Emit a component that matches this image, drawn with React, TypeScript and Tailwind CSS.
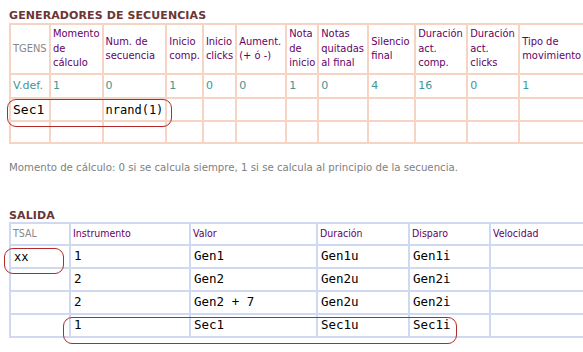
const labelFont = "font-['DejaVu_Sans_Condensed','Liberation_Sans',sans-serif]";
const valueFont = "font-['DejaVu_Sans','Verdana',sans-serif]";
const codeFont = "font-['DejaVu_Sans_Mono','Liberation_Mono',monospace]";

type Column = { label: string; width: number; def: string };

const generatorColumns: Column[] = [
  { label: "Momento de cálculo", width: 50, def: "1" },
  { label: "Num. de secuencia", width: 61, def: "0" },
  { label: "Inicio comp.", width: 34, def: "1" },
  { label: "Inicio clicks", width: 30, def: "0" },
  { label: "Aument. (+ ó -)", width: 48, def: "0" },
  { label: "Nota de inicio", width: 28, def: "1" },
  { label: "Notas quitadas al final", width: 48, def: "0" },
  { label: "Silencio final", width: 45, def: "4" },
  { label: "Duración act. comp.", width: 50, def: "16" },
  { label: "Duración act. clicks", width: 50, def: "0" },
  { label: "Tipo de movimiento", width: 57, def: "1" },
  { label: "Transp. límite", width: 60, def: "0" },
];

const outputColumns = [
  { label: "Instrumento", width: 118 },
  { label: "Valor", width: 125 },
  { label: "Duración", width: 90 },
  { label: "Disparo", width: 79 },
  { label: "Velocidad", width: 110 },
];

const outputRows = [
  { name: "xx", cells: ["1", "Gen1", "Gen1u", "Gen1i", ""] },
  { name: "", cells: ["2", "Gen2", "Gen2u", "Gen2i", ""] },
  { name: "", cells: ["2", "Gen2 + 7", "Gen2u", "Gen2i", ""] },
  { name: "", cells: ["1", "Sec1", "Sec1u", "Sec1i", ""] },
];

function SectionTitle({ children }: { children: string }) {
  return (
    <h2 className={`${valueFont} text-[11px] leading-[13px] font-bold tracking-[0.1px] text-[#6b3535]`}>
      {children}
    </h2>
  );
}

function GeneratorsTable() {
  return (
    <table className="table-fixed border-separate border-spacing-[2px] bg-[#f6d4c4] w-max">
      <colgroup>
        <col style={{ width: 38 }} />
        {generatorColumns.map((c) => (
          <col key={c.label} style={{ width: c.width }} />
        ))}
      </colgroup>
      <tbody>
        <tr>
          <td className={`${labelFont} bg-white h-[48px] px-[2px] text-[11px] leading-[14px] text-[#888888] align-middle`}>
            TGENS
          </td>
          {generatorColumns.map((c) => (
            <td
              key={c.label}
              className={`${labelFont} bg-white h-[48px] px-[2px] text-[11px] leading-[14.5px] text-[#660066] align-middle`}
            >
              {c.label}
            </td>
          ))}
        </tr>
        <tr>
          <td className={`${valueFont} bg-white h-[22px] px-[2px] text-[11px] text-[#3f9696]`}>V.def.</td>
          {generatorColumns.map((c) => (
            <td key={c.label} className={`${valueFont} bg-white h-[22px] px-[2px] text-[11px] text-[#3f9696]`}>
              {c.def}
            </td>
          ))}
        </tr>
        <tr>
          <td className={`${codeFont} bg-white h-[21px] px-[2px] text-[13px] text-black`}>Sec1</td>
          {generatorColumns.map((c, i) => (
            <td key={c.label} className={`${codeFont} bg-white h-[21px] px-[2px] text-[12px] text-black`}>
              {i === 1 ? "nrand(1)" : ""}
            </td>
          ))}
        </tr>
        <tr>
          <td className="bg-white h-[20px]" />
          {generatorColumns.map((c) => (
            <td key={c.label} className="bg-white h-[20px]" />
          ))}
        </tr>
      </tbody>
    </table>
  );
}

function OutputTable() {
  return (
    <table className="table-fixed border-separate border-spacing-[2px] bg-[#cfdaf2] w-max">
      <colgroup>
        <col style={{ width: 58 }} />
        {outputColumns.map((c) => (
          <col key={c.label} style={{ width: c.width }} />
        ))}
      </colgroup>
      <tbody>
        <tr>
          <td className={`${labelFont} bg-white h-[20px] px-[2px] text-[10.5px] text-[#888888]`}>TSAL</td>
          {outputColumns.map((c) => (
            <td key={c.label} className={`${labelFont} bg-white h-[20px] px-[2px] text-[10.5px] text-[#660066]`}>
              {c.label}
            </td>
          ))}
        </tr>
        {outputRows.map((row, r) => (
          <tr key={r}>
            <td className={`${codeFont} bg-white h-[21px] px-[3px] text-[12px] text-black`}>{row.name}</td>
            {row.cells.map((v, i) => (
              <td key={i} className={`${codeFont} bg-white h-[21px] px-[3px] text-[12.5px] text-black`}>
                {v}
              </td>
            ))}
          </tr>
        ))}
      </tbody>
    </table>
  );
}

// hand-drawn marks around the edited rows
function Mark({ className }: { className: string }) {
  return <div className={`absolute rounded-[9px] border border-[#b32a2a] pointer-events-none ${className}`} />;
}

export default function App() {
  return (
    <div className="relative w-[583px] h-[352px] overflow-hidden bg-white">
      <div className="pl-[9px] pt-[9px] flex flex-col">
        <SectionTitle>GENERADORES DE SECUENCIAS</SectionTitle>
        <div className="mt-[1px]">
          <GeneratorsTable />
        </div>
        <p className={`${valueFont} mt-[18px] text-[10.2px] leading-[12px] text-[#808080] whitespace-nowrap`}>
          Momento de cálculo: 0 si se calcula siempre, 1 si se calcula al principio de la secuencia.
        </p>
        <div className="mt-[35px]">
          <SectionTitle>SALIDA</SectionTitle>
        </div>
        <OutputTable />
      </div>

      <Mark className="left-[7px] top-[99px] w-[165px] h-[28px]" />
      <Mark className="left-[4px] top-[248px] w-[60px] h-[26px]" />
      <Mark className="left-[63px] top-[317px] w-[394px] h-[27px]" />
    </div>
  );
}
